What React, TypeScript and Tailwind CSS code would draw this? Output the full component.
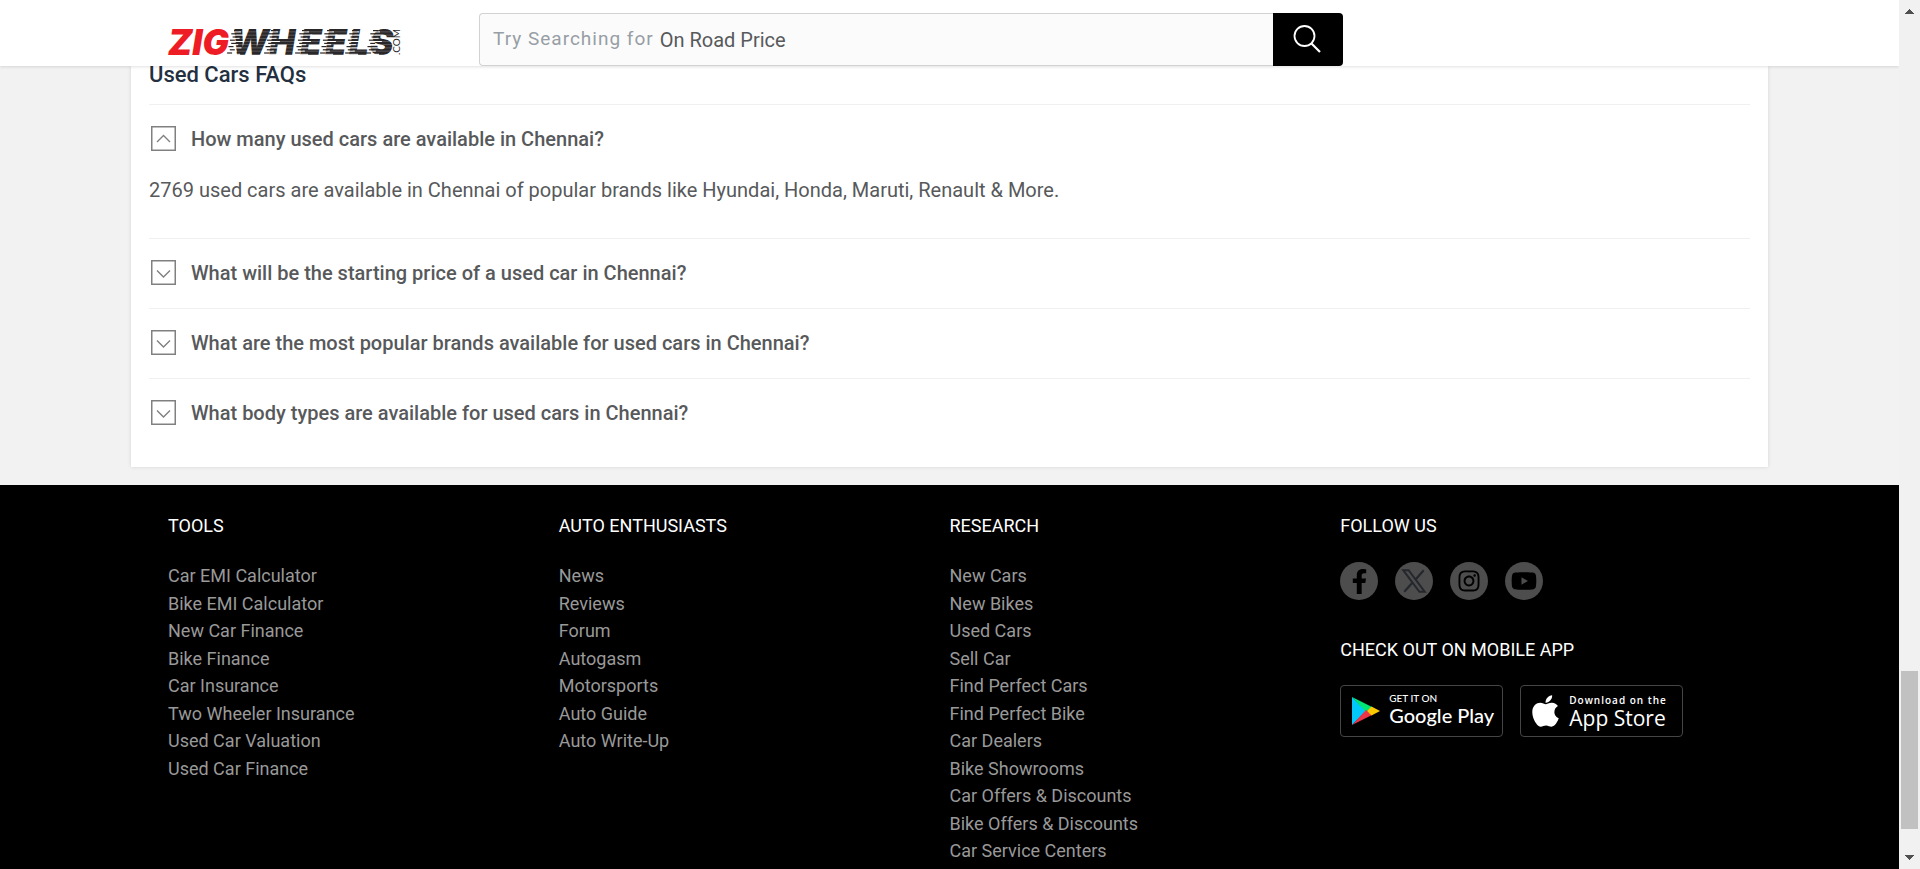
import { useState } from "react";
import { FaApple, FaFacebookF, FaInstagram, FaYoutube } from "react-icons/fa";

const faqs = [
  {
    question: "How many used cars are available in Chennai?",
    answer:
      "2769 used cars are available in Chennai of popular brands like Hyundai, Honda, Maruti, Renault & More.",
  },
  { question: "What will be the starting price of a used car in Chennai?", answer: "" },
  { question: "What are the most popular brands available for used cars in Chennai?", answer: "" },
  { question: "What body types are available for used cars in Chennai?", answer: "" },
];

const linkColumns = [
  {
    title: "TOOLS",
    links: [
      "Car EMI Calculator",
      "Bike EMI Calculator",
      "New Car Finance",
      "Bike Finance",
      "Car Insurance",
      "Two Wheeler Insurance",
      "Used Car Valuation",
      "Used Car Finance",
    ],
  },
  {
    title: "AUTO ENTHUSIASTS",
    links: ["News", "Reviews", "Forum", "Autogasm", "Motorsports", "Auto Guide", "Auto Write-Up"],
  },
  {
    title: "RESEARCH",
    links: [
      "New Cars",
      "New Bikes",
      "Used Cars",
      "Sell Car",
      "Find Perfect Cars",
      "Find Perfect Bike",
      "Car Dealers",
      "Bike Showrooms",
      "Car Offers & Discounts",
      "Bike Offers & Discounts",
      "Car Service Centers",
    ],
  },
];

// Left x, at the baseline, of the streaks that trail each letter of WHEELS.
const streakStarts = [62, 99, 130, 155, 180, 201];
const streakRows = [0, 1, 2, 3, 4, 5, 6, 7];

function Logo() {
  return (
    <svg viewBox="0 0 234 30" className="h-[30px] w-[234px] overflow-visible" role="img" aria-label="ZigWheels.com">
      <text
        x="63 101 132 157 181 202"
        y="28"
        fill="#2a2728"
        fontFamily="Inter, sans-serif"
        fontWeight="900"
        fontStyle="italic"
        fontSize="35"
      >
        WHEELS
      </text>
      {streakRows.map((r) => (
        <rect key={r} x="60" y={4.6 + r * 3.2} width="168" height="0.6" fill="#fff" opacity="0.35" />
      ))}
      {streakStarts.map((x) =>
        streakRows.map((r) => (
          <g key={`${x}-${r}`}>
            <rect x={x + 5 - r * 0.7} y={4.4 + r * 3.2} width={r % 2 ? 10 : 6} height="1" fill="#fff" />
            <rect x={x + 4 - r * 0.7 - (r % 2) * 2} y={3 + r * 3.2} width="5" height="1.2" fill="#2a2728" />
          </g>
        )),
      )}
      <text
        x="0"
        y="28"
        fill="#ee1c25"
        fontFamily="Inter, sans-serif"
        fontWeight="900"
        fontStyle="italic"
        fontSize="35"
      >
        ZIG
      </text>
      <text transform="translate(232 28) rotate(-90)" fontFamily="Lato, sans-serif" fontSize="10" fill="#2a2728">
        .COM
      </text>
    </svg>
  );
}

function Header() {
  return (
    <header className="relative z-10 flex h-[66px] shrink-0 justify-center bg-white shadow-[0_1px_3px_rgba(0,0,0,0.12)]">
      <div className="flex w-full max-w-[1637px] items-end pl-[37px]">
        <a href="#home" className="mr-[77px] mb-[9px] block shrink-0">
          <Logo />
        </a>
        <form className="flex h-[53px] w-[864px]" onSubmit={(e) => e.preventDefault()}>
          <div className="relative flex-1">
            <input
              type="text"
              aria-label="Search"
              className="h-full w-full rounded-l border border-r-0 border-[#d2d2d2] bg-[#fbfbfb] px-3 text-xl outline-none"
            />
            <div className="pointer-events-none absolute inset-y-0 left-[14px] flex items-center gap-[6px] whitespace-nowrap text-[#57595b]">
              <span className="text-[19px] tracking-[1px] text-[#979ea5]">Try Searching for</span>
              <span className="text-xl">On Road Price</span>
            </div>
          </div>
          <button
            type="submit"
            aria-label="Search"
            className="flex w-[70px] items-center justify-center rounded-r bg-black pr-[2px] pb-[2px]"
          >
            <svg viewBox="0 0 28 28" className="size-7" fill="none" stroke="#fff" strokeWidth="1.8">
              <circle cx="11.5" cy="11" r="10" />
              <path d="M18.5 18.5 27 27" strokeWidth="2.2" />
            </svg>
          </button>
        </form>
      </div>
    </header>
  );
}

function Faqs() {
  const [open, setOpen] = useState(0);
  return (
    <section className="mx-auto w-full max-w-[1637px] bg-white px-[18px] pb-[19px] shadow-[0_0_4px_rgba(0,0,0,0.12)]">
      <h2 className="mb-5 text-[22px] leading-[18px] font-medium text-[#24303f]">Used Cars FAQs</h2>
      {faqs.map((faq, i) => (
        <div key={faq.question} className="border-t border-[#f0f0f0]">
          <h3>
            <button
              type="button"
              aria-expanded={open === i}
              onClick={() => setOpen(open === i ? -1 : i)}
              className="flex h-[69px] w-full items-center gap-[15px] pb-[2px] pl-[2px] text-left text-xl font-medium text-[#57595b]"
            >
              <svg viewBox="0 0 25 25" className="size-[25px] shrink-0" fill="none" stroke="#808080">
                <rect x="0.75" y="0.75" width="23.5" height="23.5" strokeWidth="1.5" />
                <path d={open === i ? "M6 16 12.5 9.5 19 16" : "M6 10.5 12.5 17 19 10.5"} strokeWidth="1.4" />
              </svg>
              {faq.question}
            </button>
          </h3>
          {open === i && faq.answer && (
            <p className="pb-8 text-xl leading-8 text-[#57595b]">{faq.answer}</p>
          )}
        </div>
      ))}
    </section>
  );
}

function FacebookMark() {
  return <FaFacebookF className="size-[25px]" />;
}

function XMark() {
  return (
    <svg viewBox="0 0 24 24" className="size-[26px]" fill="none" stroke="#24272c" strokeWidth="1.8">
      <path d="M2 2h5l15 20h-5z" />
      <path d="M21 2 13.2 10.8M10.5 13.6 3 22" strokeWidth="2" />
    </svg>
  );
}

const socials = [
  { label: "Facebook", icon: <FacebookMark /> },
  { label: "X", icon: <XMark /> },
  { label: "Instagram", icon: <FaInstagram className="size-6" /> },
  { label: "YouTube", icon: <FaYoutube className="size-[26px]" /> },
];

function PlayMark() {
  return (
    <svg viewBox="0 0 28 30" className="h-[30px] w-7 shrink-0">
      <path d="M0 1v28l14-14z" fill="#00c8fa" />
      <path d="M0 1l20 10-6 5z" fill="#00e676" />
      <path d="M0 29l20-10-6-5z" fill="#ee3448" />
      <path d="M19.5 10.5 28 15l-8.500 4.500L15 15z" fill="#ffc900" />
    </svg>
  );
}

function Footer() {
  return (
    <footer className="flex-1 bg-black">
      <div className="mx-auto grid w-full max-w-[1637px] grid-cols-4 px-[37px] pt-[27px]">
        {linkColumns.map((col) => (
          <nav key={col.title} aria-label={col.title}>
            <h2 className="mb-[22px] text-lg leading-7 text-white">{col.title}</h2>
            <ul className="text-lg leading-[1.53] text-[#999]">
              {col.links.map((link) => (
                <li key={link}>
                  <a href="#link">{link}</a>
                </li>
              ))}
            </ul>
          </nav>
        ))}
        <div>
          <h2 className="text-lg leading-7 text-white">FOLLOW US</h2>
          <div className="mt-[22px] flex gap-[17px]">
            {socials.map((s) => (
              <a
                key={s.label}
                href="#social"
                aria-label={s.label}
                className="flex size-[38px] items-center justify-center rounded-full bg-[#4d4d4d] text-black"
              >
                {s.icon}
              </a>
            ))}
          </div>
          <h2 className="mt-9 text-lg leading-7 text-white">CHECK OUT ON MOBILE APP</h2>
          <div className="mt-[21px] flex gap-[17px]">
            <a
              href="#play"
              className="flex h-[52px] w-[163px] items-center gap-[9px] rounded border border-[#454545] pl-[11px] text-white"
            >
              <PlayMark />
              <span className="flex flex-col pb-1 font-[Lato] font-medium whitespace-nowrap">
                <span className="text-[10px] leading-3">GET IT ON</span>
                <span className="text-[20px] leading-[22px]">Google Play</span>
              </span>
            </a>
            <a
              href="#appstore"
              className="flex h-[52px] w-[163px] items-center gap-[10px] rounded border border-[#454545] pl-[11px] text-white"
            >
              <FaApple className="h-9 w-[27px] shrink-0" />
              <span className="flex flex-col font-['Open_Sans'] whitespace-nowrap">
                <span className="text-[10px] leading-[14px] font-semibold tracking-[1px]">Download on the</span>
                <span className="text-[21px] leading-[22px] font-medium">App Store</span>
              </span>
            </a>
          </div>
        </div>
      </div>
    </footer>
  );
}

function Scrollbar() {
  return (
    <div className="flex w-[21px] shrink-0 flex-col bg-[#f1f1f1]" aria-hidden="true">
      <svg viewBox="0 0 21 21" className="size-[21px] shrink-0" shapeRendering="crispEdges">
        <path d="M6 14h9l-4.500-5z" fill="#505050" />
      </svg>
      <div className="grow-[650]" />
      <div className="mx-[2px] grow-[158] bg-[#c1c1c1]" />
      <div className="grow-[19]" />
      <svg viewBox="0 0 21 21" className="size-[21px] shrink-0" shapeRendering="crispEdges">
        <path d="M6 7h9l-4.500 5z" fill="#505050" />
      </svg>
    </div>
  );
}

export default function App() {
  return (
    <div className="flex h-screen overflow-hidden font-[Roboto,sans-serif]">
      <div className="flex min-w-0 flex-1 flex-col overflow-hidden bg-[#f2f2f2]">
        <Header />
        <main className="shrink-0 pb-[18px]">
          <Faqs />
        </main>
        <Footer />
      </div>
      <Scrollbar />
    </div>
  );
}
